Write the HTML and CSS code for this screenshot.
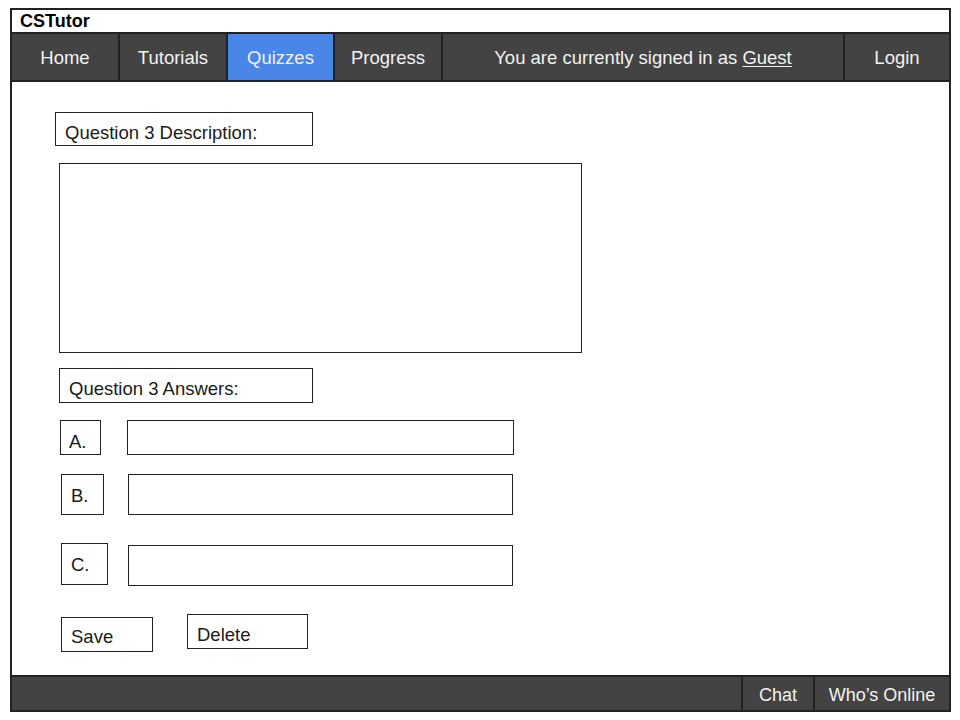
FILE: index.html
```html
<!DOCTYPE html>
<html>
<head>
<meta charset="utf-8">
<title>CSTutor</title>
<link rel="stylesheet" href="styles.css">
</head>
<body>
<div class="frame">
  <div class="title">CSTutor</div>
  <nav class="nav">
    <div class="cell home">Home</div>
    <div class="cell tutorials">Tutorials</div>
    <div class="cell quizzes active">Quizzes</div>
    <div class="cell progress">Progress</div>
    <div class="cell signed"><span>You are currently signed in as <u>Guest</u></span></div>
    <div class="cell login">Login</div>
  </nav>
  <main class="content">
    <div class="box desc-label">Question 3 Description:</div>
    <div class="box desc-area"></div>
    <div class="box answers-label">Question 3 Answers:</div>
    <div class="row row-a">
      <div class="box opt opt-a">A.</div>
      <div class="box input input-a"></div>
    </div>
    <div class="row row-b">
      <div class="box opt opt-b">B.</div>
      <div class="box input input-b"></div>
    </div>
    <div class="row row-c">
      <div class="box opt opt-c">C.</div>
      <div class="box input input-c"></div>
    </div>
    <div class="row row-btn">
      <div class="box btn save">Save</div>
      <div class="box btn delete">Delete</div>
    </div>
  </main>
  <footer class="footer">
    <div class="fspace"></div>
    <div class="fcell chat">Chat</div>
    <div class="fcell online">Who’s Online</div>
  </footer>
</div>
</body>
</html>
```
FILE: styles.css
```css
* { box-sizing: border-box; }
html, body { margin: 0; padding: 0; background: #fff; }
body { font-family: "Liberation Sans", Arial, sans-serif; color: #111; }

.frame {
  margin: 8px 0 0 10px;
  width: 941px;
  height: 704px;
  border: 2px solid #222;
  display: flex;
  flex-direction: column;
}

.title {
  height: 22px;
  line-height: 22px;
  font-weight: bold;
  font-size: 18px;
  padding-left: 8px;
  color: #000;
}

.nav {
  display: flex;
  height: 50px;
  background: #434343;
  border-top: 2px solid #222;
  border-bottom: 2px solid #222;
}
.cell {
  color: #f2f2f2;
  font-size: 18.5px;
  display: flex;
  align-items: center;
  justify-content: center;
  padding-top: 2px;
  border-right: 2px solid #222;
}
.home { width: 108px; }
.tutorials { width: 108px; }
.quizzes { width: 107px; }
.progress { width: 108px; }
.signed { width: 402px; }
.login { flex: 1; border-right: none; }
.active { background: #4a86e8; }
.cell u { text-decoration-thickness: 1px; text-underline-offset: 2px; }

.content {
  flex: 1;
  display: flex;
  flex-direction: column;
  align-items: flex-start;
}

.box {
  border: 1px solid #222;
  background: #fff;
  font-size: 18.5px;
  line-height: 20px;
  padding: 10px 0 0 9px;
  color: #1a1a1a;
  white-space: nowrap;
}

.desc-label { margin: 30px 0 0 43px; width: 258px; height: 34px; }
.desc-area { margin: 17px 0 0 47px; width: 523px; height: 190px; padding: 0; }
.answers-label { margin: 15px 0 0 47px; width: 254px; height: 35px; }

.row { display: flex; align-items: flex-start; }
.input { padding: 0; }

.row-a { margin-top: 17px; }
.opt-a { margin-left: 48px; width: 41px; height: 35px; padding: 11px 0 0 8px; }
.input-a { margin-left: 26px; width: 387px; height: 35px; }

.row-b { margin-top: 19px; }
.opt-b { margin-left: 49px; width: 43px; height: 41px; padding: 11px 0 0 9px; }
.input-b { margin-left: 24px; width: 385px; height: 41px; }

.row-c { margin-top: 28px; }
.opt-c { margin-left: 49px; width: 47px; height: 42px; padding: 11px 0 0 9px; }
.input-c { margin: 2px 0 0 20px; width: 385px; height: 41px; }

.row-btn { margin-top: 28px; }
.save { margin: 3px 0 0 49px; width: 92px; height: 35px; padding-top: 9px; }
.delete { margin-left: 34px; width: 121px; height: 35px; }

.footer {
  display: flex;
  height: 35px;
  background: #434343;
  border-top: 2px solid #222;
}
.fspace { width: 729px; }
.fcell {
  color: #f2f2f2;
  font-size: 18px;
  display: flex;
  align-items: center;
  justify-content: center;
  padding-top: 4px;
  border-left: 2px solid #222;
}
.chat { width: 72px; }
.online { flex: 1; }
```
